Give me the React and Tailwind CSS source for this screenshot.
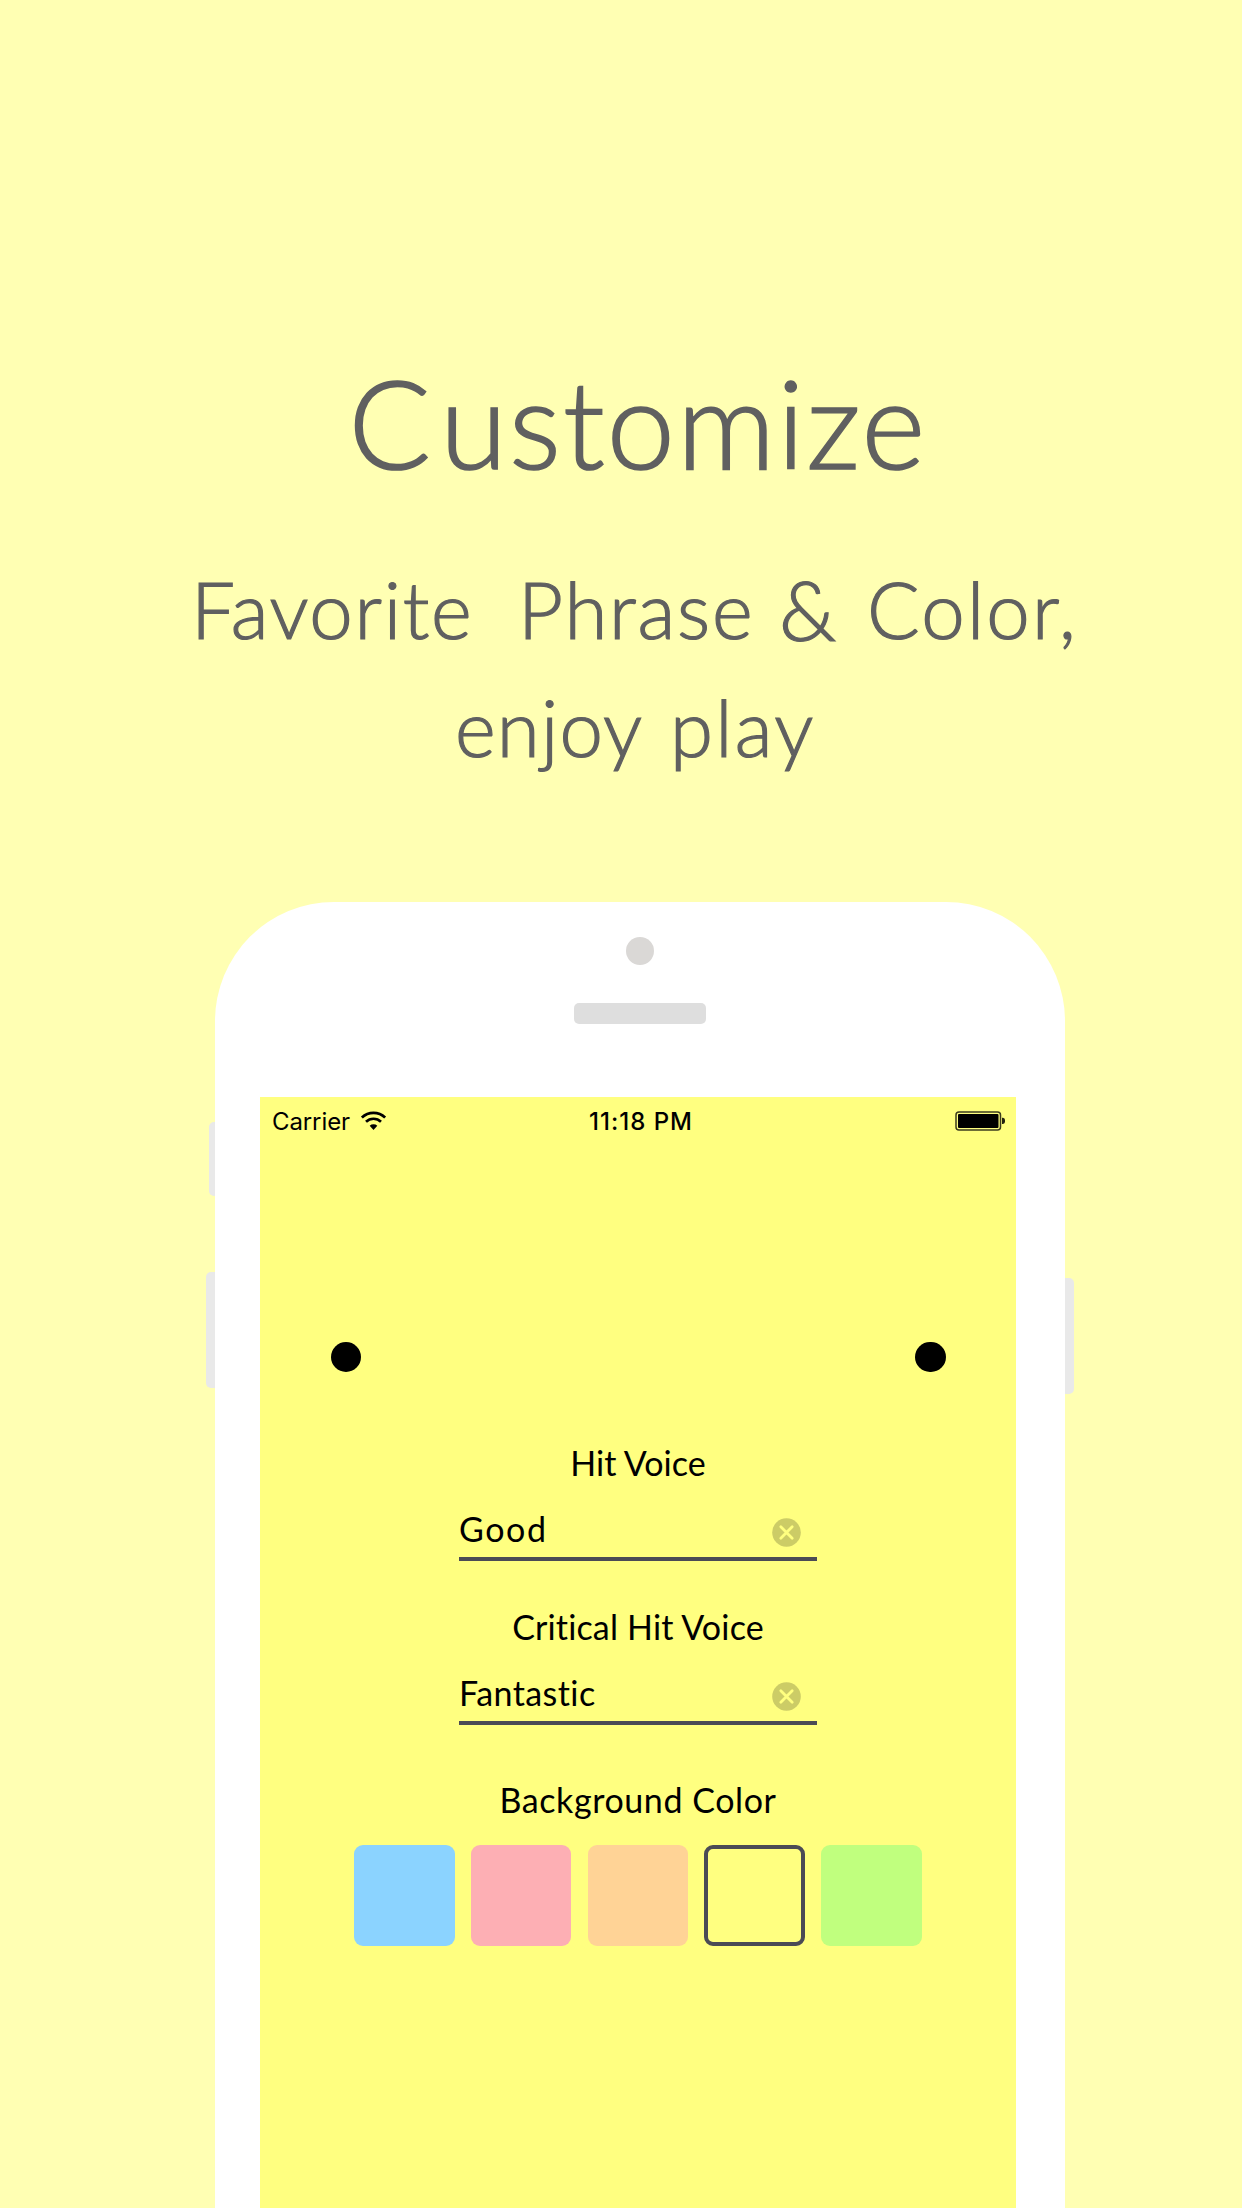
import React from "react";

const swatches = [
  "bg-[#8bd3ff]",
  "bg-[#fdafb4]",
  "bg-[#ffd396]",
  "border-[4px] border-[#4b4b55]",
  "bg-[#c0ff7e]",
];

function WifiIcon() {
  return (
    <svg width="25" height="20" viewBox="0 0 25 20" className="ml-[11px] mt-[1px]" fill="none" stroke="#000">
      <path d="M0.9 6.6 A16.6 16.6 0 0 1 24.1 6.6" strokeWidth="2.7" />
      <path d="M5 10.8 A10.8 10.8 0 0 1 20 10.8" strokeWidth="2.7" />
      <path d="M12.5 19 L8.7 14.7 A5.6 5.6 0 0 1 16.3 14.7 Z" fill="#000" stroke="none" />
    </svg>
  );
}

function BatteryIcon() {
  return (
    <svg width="50" height="20" viewBox="0 0 50 20" className="mt-[1px]">
      <rect x="1" y="1" width="44.5" height="18" rx="3" fill="none" stroke="#3c3c1e" strokeWidth="1.5" />
      <rect x="3" y="3" width="40.5" height="14" rx="1" fill="#000" />
      <path d="M47 6.8 h1 a2.2 2.2 0 0 1 2 2.2 v1.8 a2.2 2.2 0 0 1 -2 2.2 h-1 z" fill="#222210" />
    </svg>
  );
}

function ClearIcon() {
  return (
    <svg width="29" height="29" viewBox="0 0 29 29" className="mt-[9px] mr-[16px]">
      <circle cx="14.5" cy="14.5" r="14.3" fill="#cccc66" />
      <path d="M8.8 8.8 L20.2 20.2 M20.2 8.8 L8.8 20.2" stroke="#ffff80" strokeWidth="2.8" strokeLinecap="round" />
    </svg>
  );
}

function Field({ children }) {
  return (
    <div className="ml-[199px] flex h-[52px] w-[357.5px] items-start justify-between border-b-[4px] border-[#4b4b55]">
      {children}
      <ClearIcon />
    </div>
  );
}

export default function App() {
  return (
    <div className="h-[2208px] w-[1242px] overflow-hidden bg-[#ffffb3] font-['Lato',sans-serif] text-black">
      <header className="flex h-[902px] flex-col pt-[352px] font-light text-[#606060]">
        <h1 className="ml-[348.5px] h-[199px] whitespace-nowrap text-[122px] leading-[140px] tracking-[2.1px] [-webkit-text-stroke:1.7px_#606060]">
          <span className="tracking-[9px]">C</span>ustomize
        </h1>
        <p className="flex whitespace-nowrap pl-[191px] text-[78px] leading-[117px] [-webkit-text-stroke:1.2px_#606060]">
          <span className="w-[327px] tracking-[1.64px]">Favorite</span>
          <span className="w-[261px] tracking-[1.76px]">Phrase</span>
          <span className="w-[88px] text-[82px]">&amp;</span>
          <span className="tracking-[2.2px]">Color,</span>
        </p>
        <p className="mt-[1px] flex whitespace-nowrap pl-[455px] text-[78px] leading-[117px] [-webkit-text-stroke:1.2px_#606060]">
          <span className="w-[215px] tracking-[1.15px]">enjoy</span>
          <span className="tracking-[2.3px]">play</span>
        </p>
      </header>

      <main className="flex items-start">
        <div className="flex w-[215px] flex-col items-end pt-[220px]">
          <div className="h-[74px] w-[6px] rounded-l-[5px] bg-[#e9e9e9]" />
          <div className="mt-[76px] h-[116px] w-[9px] rounded-l-[5px] bg-[#e9e9e9]" />
        </div>

        <div className="h-[1306px] w-[850px] rounded-t-[119px] bg-white">
          <div className="flex h-[195px] flex-col items-center pt-[35px]">
            <div className="h-[27.5px] w-[27.5px] rounded-full bg-[#dad8d6]" />
            <div className="mt-[38.5px] h-[21px] w-[132px] rounded-[5px] bg-[#dedede]" />
          </div>

          <section className="ml-[45px] h-[1111px] w-[756px] bg-[#ffff80]">
            <div className="grid grid-cols-3 px-[12px] pt-[12.5px] font-['Inter',sans-serif] text-[24px] leading-[24px]">
              <div className="flex items-start">
                <span className="tracking-[-0.1px]">Carrier</span>
                <WifiIcon />
              </div>
              <span className="pl-[6px] text-center font-medium tracking-[1px]">11:18 PM</span>
              <div className="-mr-[1px] flex justify-end">
                <BatteryIcon />
              </div>
            </div>

            <div className="mt-[208.5px] flex justify-between pl-[70.5px] pr-[70.5px]">
              <div className="h-[30px] w-[30.5px] rounded-full bg-black" />
              <div className="h-[30px] w-[30.5px] rounded-full bg-black" />
            </div>

            <div className="flex flex-col text-[34px] leading-[40px]">
              <h2 className="mt-[70.5px] mb-[26px] text-center">Hit Voice</h2>
              <Field>
                <span className="tracking-[1.6px]">Good</span>
              </Field>
              <h2 className="mt-[46px] mb-[26px] text-center tracking-[0.17px]">Critical Hit Voice</h2>
              <Field>
                <span className="tracking-[0.41px]">Fantastic</span>
              </Field>
              <h2 className="mt-[55px] text-center tracking-[0.58px]">Background Color</h2>
            </div>

            <div className="ml-[94px] mt-[25.5px] flex w-[567.5px] justify-between">
              {swatches.map((s) => (
                <button key={s} className={"h-[100.5px] w-[100.5px] rounded-[9px] " + s} />
              ))}
            </div>
          </section>
        </div>

        <div className="mt-[376px] h-[116px] w-[9px] rounded-r-[5px] bg-[#e9e9e9]" />
      </main>
    </div>
  );
}
